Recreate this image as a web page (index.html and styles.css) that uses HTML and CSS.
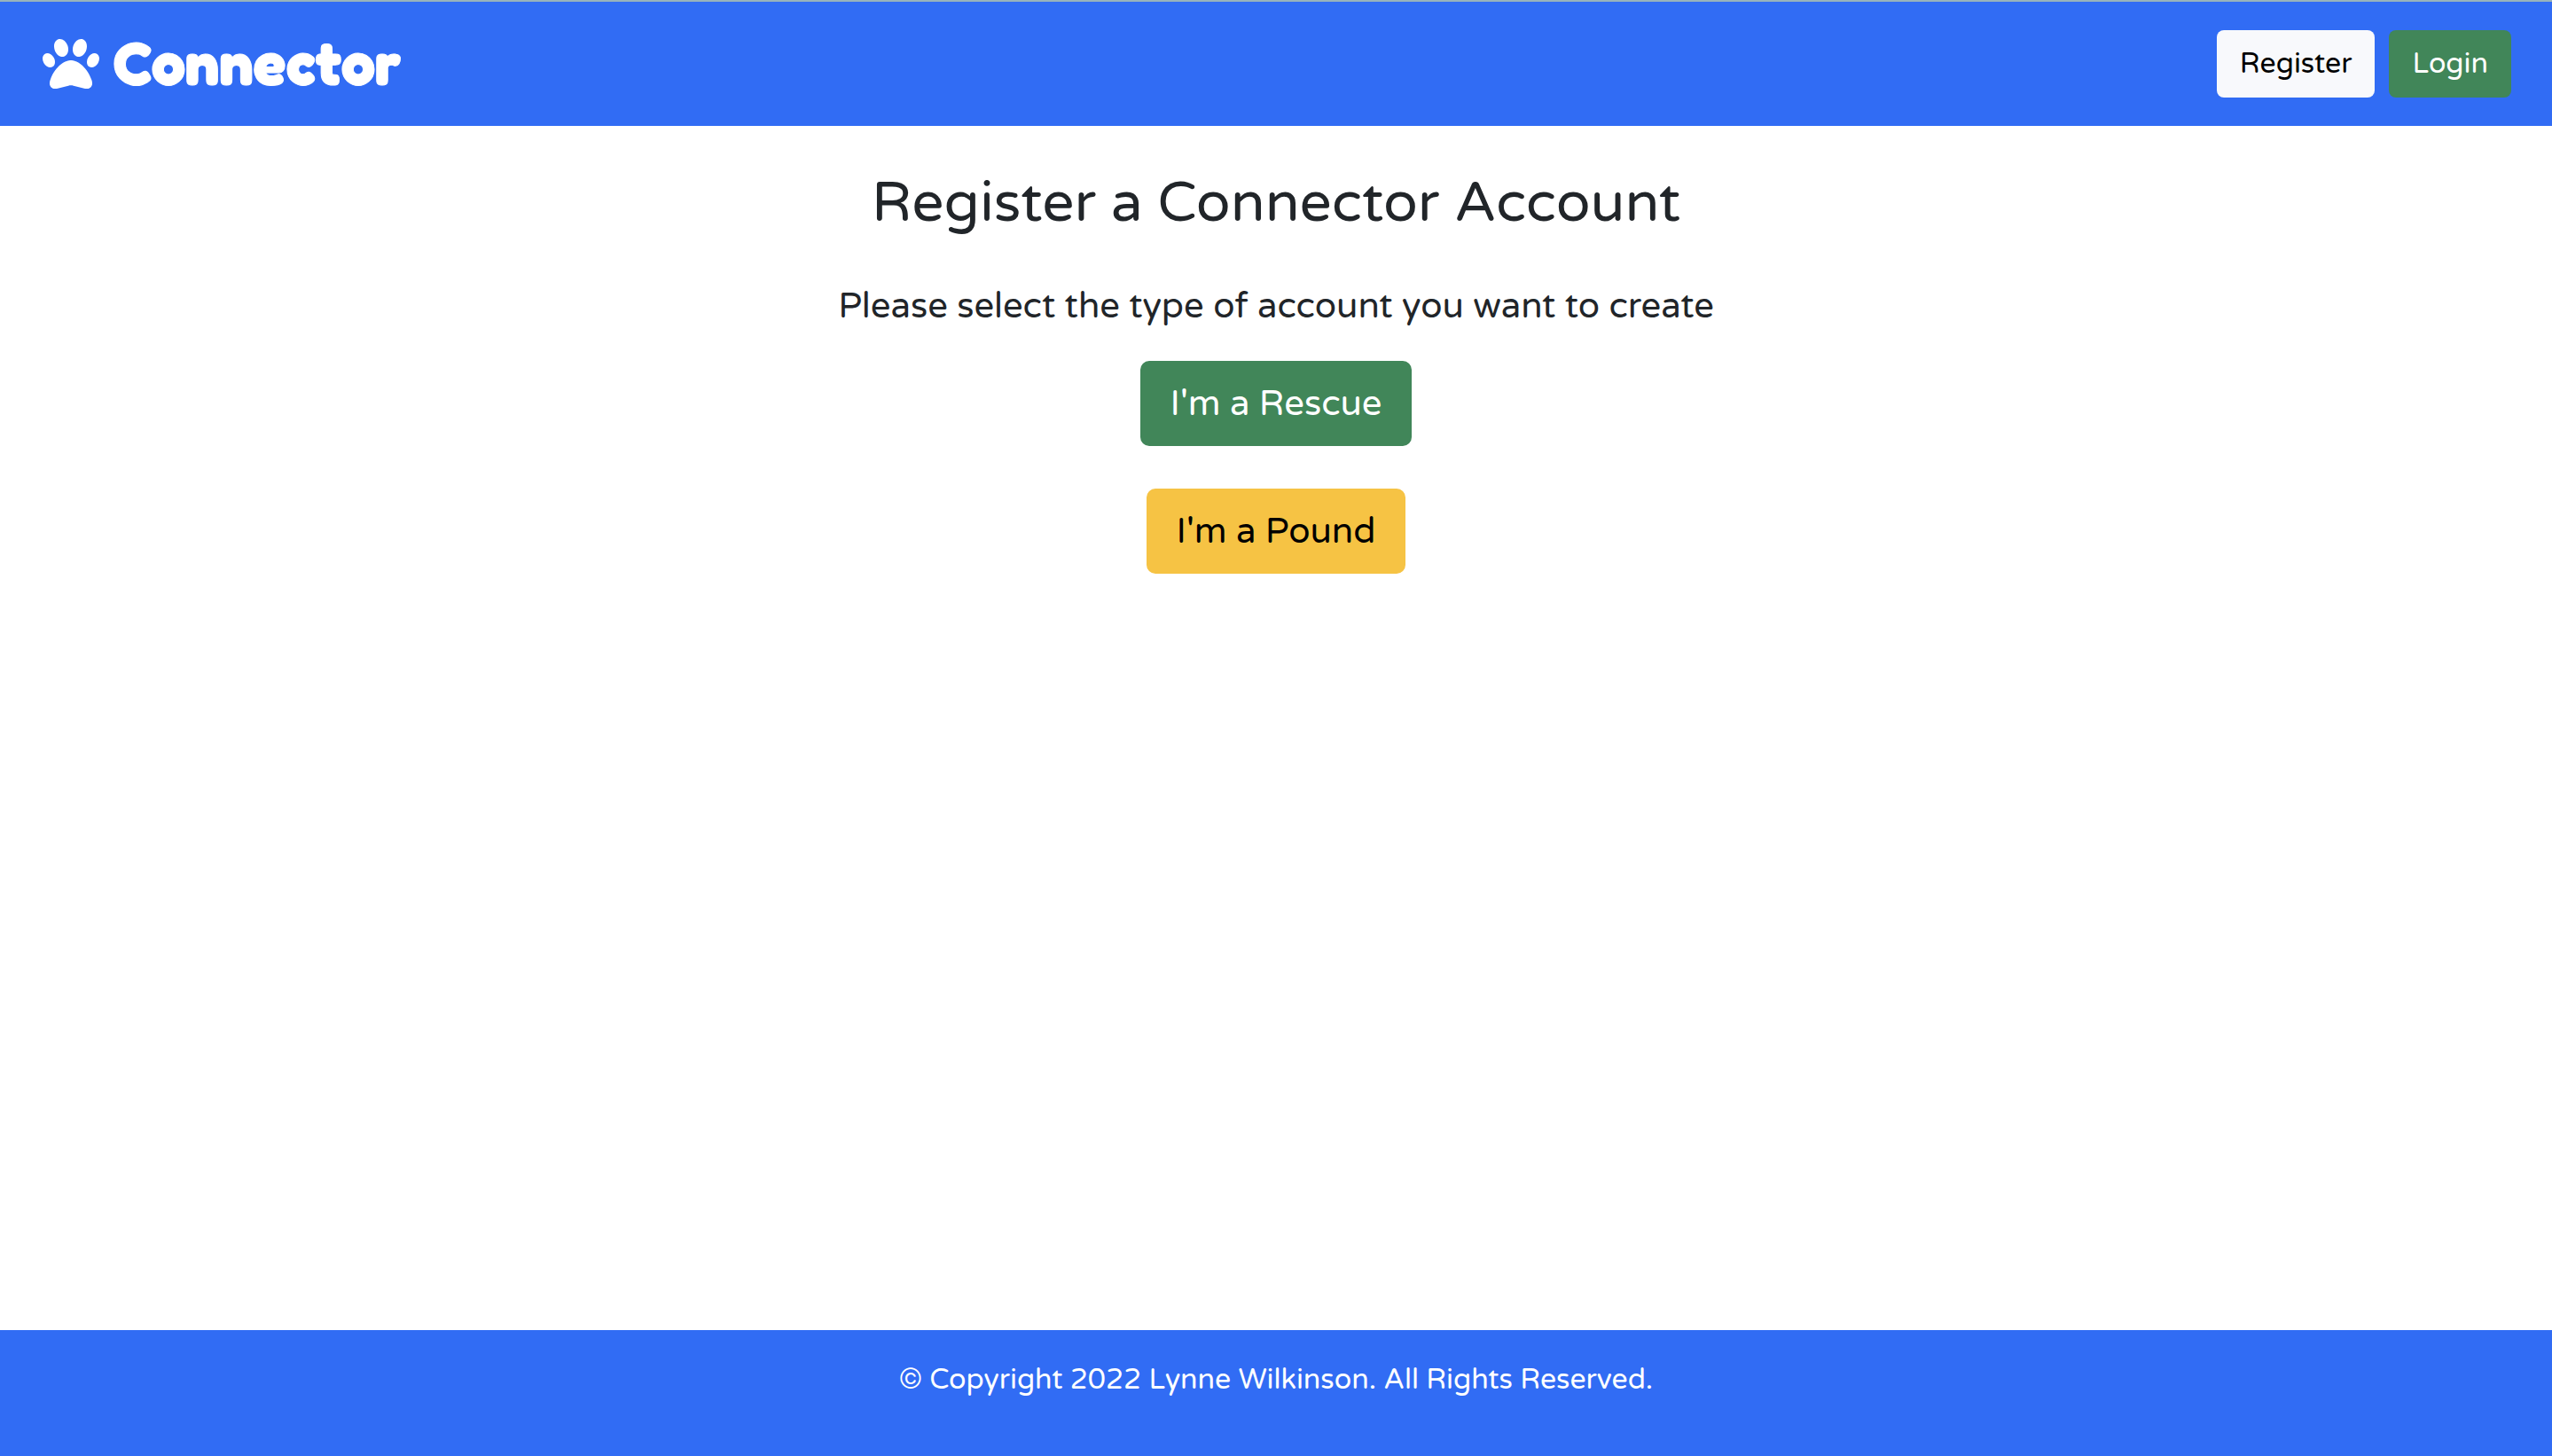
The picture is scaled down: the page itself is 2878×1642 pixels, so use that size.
FILE: index.html
```html
<!DOCTYPE html>
<html lang="en">
<head>
  <meta charset="utf-8">
  <meta name="viewport" content="width=device-width, initial-scale=1">
  <title>Connector</title>
  <link rel="stylesheet" href="styles.css">
</head>
<body>
  <header class="navbar">
    <a class="brand" href="#">
      <svg class="brand-icon" viewBox="0 0 512 512" aria-hidden="true"><path fill="currentColor" d="M226.5 92.9c14.3 42.9-.3 86.2-32.6 96.8s-70.1-15.6-84.4-58.5s.3-86.2 32.6-96.8s70.1 15.6 84.4 58.5zM100.4 198.6c18.9 32.4 14.3 70.1-10.2 84.1s-59.7-.9-78.5-33.3S-2.7 179.3 21.8 165.3s59.7 .9 78.5 33.3zM69.2 401.2C121.6 259.9 214.7 224 256 224s134.4 35.9 186.8 177.2c3.6 9.7 5.2 20.1 5.2 30.5v1.6c0 25.8-20.9 46.7-46.7 46.7c-11.5 0-22.9-1.4-34-4.2l-88-22c-15.3-3.8-31.3-3.8-46.6 0l-88 22c-11.1 2.8-22.5 4.2-34 4.2C84.9 480 64 459.1 64 433.3v-1.6c0-10.4 1.6-20.8 5.2-30.5zM421.8 282.7c-24.5-14-29.1-51.7-10.2-84.1s54-47.3 78.5-33.3s29.1 51.7 10.2 84.1s-54 47.3-78.5 33.3zM310.1 189.7c-32.3-10.6-46.9-53.9-32.6-96.8s52.1-69.1 84.4-58.5s46.9 53.9 32.6 96.8s-52.1 69.1-84.4 58.5z"/></svg>
      <span class="brand-name">Connector</span>
    </a>
    <nav class="nav-actions">
      <button class="btn btn-light" type="button">Register</button>
      <button class="btn btn-success" type="button">Login</button>
    </nav>
  </header>
  <main class="content">
    <h1 class="title">Register a Connector Account</h1>
    <p class="lead">Please select the type of account you want to create</p>
    <div class="choices">
      <button class="btn btn-lg btn-success" type="button">I'm a Rescue</button>
      <button class="btn btn-lg btn-warning" type="button">I'm a Pound</button>
    </div>
  </main>
  <footer class="footer">
    <p class="copyright">© Copyright 2022 Lynne Wilkinson. All Rights Reserved.</p>
  </footer>
</body>
</html>
```
FILE: styles.css
```css
*,
*::before,
*::after {
  box-sizing: border-box;
}

body {
  margin: 0;
  min-height: 100vh;
  display: flex;
  flex-direction: column;
  background: #fff;
  color: #212529;
  font-family: "Varela Round", Inter, "Liberation Sans", sans-serif;
  font-size: 32px;
  line-height: 48px;
}

.navbar {
  display: flex;
  align-items: center;
  justify-content: space-between;
  padding: 32px 46px 32px 48px;
  border-top: 2px solid #98b3bb;
  background: #316cf4;
}

.brand {
  display: flex;
  align-items: center;
  gap: 16px;
  color: #fff;
  text-decoration: none;
}

.brand-icon {
  width: 64px;
  height: 64px;
}

.brand-name {
  padding-bottom: 4px;
  font-family: Fredoka, "Varela Round", Inter, "Liberation Sans", sans-serif;
  font-size: 68px;
  font-weight: 700;
  line-height: 72px;
  -webkit-text-stroke: 1px #fff;
}

.nav-actions {
  display: flex;
  gap: 16px;
}

.btn {
  padding: 14px 26px;
  border: 0;
  border-radius: 8px;
  font: inherit;
  cursor: pointer;
}

.btn-lg {
  padding: 18px 34px;
  border-radius: 10px;
  font-size: 40px;
  line-height: 60px;
}

.btn-light {
  background: #f8f9fc;
  color: #000;
}

.btn-success {
  background: #418659;
  color: #fff;
}

.btn-warning {
  background: #f6c344;
  color: #000;
}

.content {
  flex: 1;
  display: flex;
  flex-direction: column;
  align-items: center;
  padding: 48px 24px;
  text-align: center;
}

.title {
  margin: 0 0 48px;
  font-size: 64px;
  font-weight: 400;
  line-height: 77px;
}

.lead {
  margin: 0 0 32px;
  font-size: 40px;
  line-height: 60px;
}

.choices {
  display: flex;
  flex-direction: column;
  align-items: center;
  gap: 48px;
}

.footer {
  padding: 32px 24px 62px;
  background: #316cf4;
  color: #fff;
  text-align: center;
}

.copyright {
  margin: 0;
}
```
